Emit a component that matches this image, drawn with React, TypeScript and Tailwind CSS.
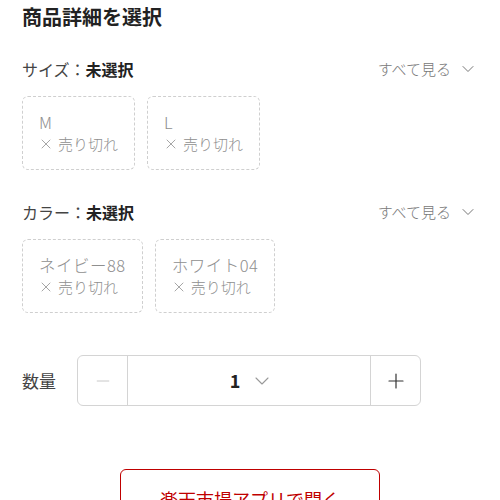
import { ChevronDown, Minus, Plus, X } from "lucide-react";

const sizes = ["M", "L"];
const colors = ["ネイビー88", "ホワイト04"];

function OptionBox({ label }: { label: string }) {
  return (
    <div className="border border-dashed border-[#cfcfcf] rounded-md px-4 py-[15px] leading-[21px] text-[#8f8f8f] font-light">
      <div className="text-[16.5px] tracking-[0.5px]">{label}</div>
      <div className="flex items-center text-[15px]">
        <X size={16} strokeWidth={1.2} className="mr-[4px] -ml-[1px]" />
        <span>売り切れ</span>
      </div>
    </div>
  );
}

function Section({ title, options }: { title: string; options: string[] }) {
  return (
    <div>
      <div className="flex items-center justify-between h-[22px]">
        <p className="text-[16px] text-[#444]">
          {title}：<span className="font-bold text-[#222]">未選択</span>
        </p>
        <button className="flex items-center gap-[7px] text-[15px] text-[#777] font-light">
          すべて見る
          <ChevronDown size={20} strokeWidth={1.2} />
        </button>
      </div>
      <div className="flex gap-3 mt-4">
        {options.map((o) => (
          <OptionBox key={o} label={o} />
        ))}
      </div>
    </div>
  );
}

export default function App() {
  return (
    <div
      className="w-[500px] h-[500px] overflow-hidden bg-white px-[22px]"
      style={{ fontFamily: '"Noto Sans CJK JP", "Noto Sans", sans-serif' }}
    >
      <h1 className="mt-[3px] text-[20px] leading-[28px] font-bold text-[#222]">商品詳細を選択</h1>

      <div className="mt-[27px]">
        <Section title="サイズ" options={sizes} />
      </div>

      <div className="mt-[31px]">
        <Section title="カラー" options={colors} />
      </div>

      <div className="flex items-center mt-[42px]">
        <span className="w-[55px] text-[17px] text-[#444]">数量</span>
        <div className="flex w-[344px] h-[51px] border border-[#d4d4d4] rounded-md">
          <button className="w-[50px] flex items-center justify-center border-r border-[#d4d4d4] text-[#c8c8c8]">
            <Minus size={20} strokeWidth={1.2} />
          </button>
          <div className="flex-1 flex items-center justify-center gap-[10px] pl-[6px]">
            <span className="text-[18px] font-bold text-[#222]">1</span>
            <ChevronDown size={24} strokeWidth={1.1} className="text-[#999]" />
          </div>
          <button className="w-[50px] flex items-center justify-center border-l border-[#d4d4d4] text-[#333]">
            <Plus size={24} strokeWidth={1.2} />
          </button>
        </div>
      </div>

      <div className="flex justify-center mt-[63px]">
        <button className="w-[260px] h-[60px] border border-[#bf0000] rounded-md text-[#bf0000] text-[18px]">
          楽天市場アプリで開く
        </button>
      </div>
    </div>
  );
}
